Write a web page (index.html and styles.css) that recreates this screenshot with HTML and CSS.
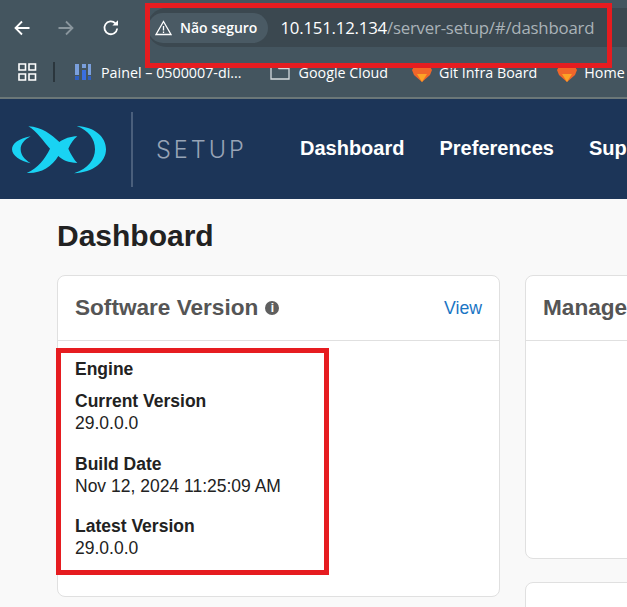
FILE: index.html
```html
<!DOCTYPE html>
<html lang="en">
<head>
    <meta charset="UTF-8">
    <meta name="viewport" content="width=device-width, initial-scale=1.0">
    <title>Dashboard</title>
    <link rel="stylesheet" href="styles.css">
</head>
<body>
    <div class="browser">
        <div class="toolbar">
            <svg class="tool-icon" width="18" height="18" viewBox="0 0 18 18"><path d="M16.5 9H2.5M9 2.5L2.5 9L9 15.5" fill="none" stroke="#fff" stroke-width="1.8"/></svg>
            <svg class="tool-icon forward" width="18" height="18" viewBox="0 0 18 18"><path d="M1.5 9H15.5M9 2.5L15.5 9L9 15.5" fill="none" stroke="#8a969d" stroke-width="1.8"/></svg>
            <svg class="tool-icon reload" width="18" height="18" viewBox="0 0 18 18"><path d="M15.2 9.5A6.4 6.4 0 1 1 13.4 4.3" fill="none" stroke="#fff" stroke-width="1.8"/><path d="M10.4 6.6H16V1.2Z" fill="#fff"/></svg>
            <div class="omnibox">
                <div class="chip">
                    <svg width="17" height="16" viewBox="0 0 17 16"><path d="M8.5 1.5L16 14.5H1Z" fill="none" stroke="#fff" stroke-width="1.3"/><path d="M8.5 6V10.5M8.5 11.5V13" stroke="#fff" stroke-width="1.3"/></svg>
                    <span>Não seguro</span>
                </div>
                <div class="url">10.151.12.134<span class="url-path">/server-setup/#/dashboard</span></div>
            </div>
        </div>
        <div class="bookmarks">
            <svg class="apps" width="19" height="18" viewBox="0 0 19 18"><path d="M1 1h6.500v6h-6.500zM11 1h6.500v6h-6.500zM1 11h6.500v6h-6.500zM11 11h6.500v6h-6.500z" fill="none" stroke="#fff" stroke-width="1.600"/></svg>
            <span class="sep"></span>
            <div class="mark first">
                <svg width="16" height="16" viewBox="0 0 16 16"><path d="M0 0h4v11H0zM13 0h3v11h-3zM7 0h4v4H7z" fill="#7a9fdc"/><path d="M0 12h4v4H0zM13 12h3v4h-3z" fill="#2f5fc0"/><path d="M7 6h4v10H7z" fill="#3a6fe0"/></svg>
                <span>Painel – 0500007-di...</span>
            </div>
            <div class="mark folder">
                <svg width="20" height="15" viewBox="0 0 20 15"><path d="M1 14V1h6l2 2.500h10V14Z" fill="none" stroke="#d5dadd" stroke-width="1.300"/></svg>
                <span>Google Cloud</span>
            </div>
            <div class="mark">
                <svg width="20" height="20" viewBox="0 0 20 20"><path d="M0 8L3 3L10 6L17 3L20 8L18 13L10 20L2 13Z" fill="#f0662a"/><path d="M5 12H15L10 20Z" fill="#fca326"/></svg>
                <span>Git Infra Board</span>
            </div>
            <div class="mark home">
                <svg width="20" height="20" viewBox="0 0 20 20"><path d="M0 8L3 3L10 6L17 3L20 8L18 13L10 20L2 13Z" fill="#f0662a"/><path d="M5 12H15L10 20Z" fill="#fca326"/></svg>
                <span>Home</span>
            </div>
        </div>
    </div>

    <header class="topnav">
        <svg class="logo" width="94" height="49" viewBox="36 80 282 145">
            <path d="M92 113C55 120 36 135 36 152C36 170 60 188 92 194C72 182 62 168 62 152C62 136 72 124 92 113Z" fill="#19d3f3"/>
            <path d="M230 82C285 85 318 115 318 152C318 190 280 222 222 224C265 210 285 182 285 152C285 120 265 95 230 82Z" fill="#19d3f3"/>
            <path d="M85 83C125 85 155 108 178 130C190 138 200 145 205 150C212 165 222 183 232 193C205 192 188 185 175 172C165 165 155 157 150 150C130 128 110 98 85 83Z" fill="#19d3f3"/>
            <path d="M232 113C212 113 192 120 178 130C165 138 155 145 150 150C135 180 115 208 80 223C120 226 155 205 175 172C185 165 195 160 205 150C212 135 220 122 232 113Z" fill="#19d3f3"/>
        </svg>
        <span class="nav-divider"></span>
        <span class="product">SETUP</span>
        <nav class="nav-links">
            <a>Dashboard</a>
            <a>Preferences</a>
            <a>Support</a>
        </nav>
    </header>

    <main class="content">
        <h1>Dashboard</h1>
        <div class="grid">
            <section class="card version-card">
                <div class="card-head">
                    <h2>Software Version</h2>
                    <span class="info">i</span>
                    <a class="view">View</a>
                </div>
                <div class="card-body">
                    <div class="engine">Engine</div>
                    <div class="field">
                        <b>Current Version</b>
                        <span>29.0.0.0</span>
                    </div>
                    <div class="field">
                        <b>Build Date</b>
                        <span>Nov 12, 2024 11:25:09 AM</span>
                    </div>
                    <div class="field">
                        <b>Latest Version</b>
                        <span>29.0.0.0</span>
                    </div>
                </div>
            </section>
            <div class="side">
                <section class="card manage-card">
                    <div class="card-head">
                        <h2>Manage</h2>
                    </div>
                </section>
                <section class="card">
                    <div class="card-head">
                        <h2>Storage</h2>
                    </div>
                </section>
            </div>
        </div>
    </main>

    <div class="mark-box url-box"></div>
    <div class="mark-box engine-box"></div>
</body>
</html>
```

FILE: styles.css
```css
html, body {
    margin: 0;
    padding: 0;
    height: 100%;
    overflow: hidden;
}

body {
    position: relative;
    width: 627px;
    height: 607px;
    background-color: #f9f9f9;
    font-family: "Liberation Sans", Arial, sans-serif;
    color: #222;
}

/* browser chrome */
.browser {
    height: 97px;
    background-color: #44555f;
    border-bottom: 2px solid #6b7778;
    font-family: "Open Sans", "Noto Sans", sans-serif;
    color: #fff;
}

.toolbar {
    display: flex;
    align-items: center;
    height: 39px;
    padding: 8px 0 8px 13px;
}

.tool-icon {
    flex: none;
}

.forward {
    margin-left: 26px;
}

.reload {
    margin-left: 27px;
}

.omnibox {
    display: flex;
    align-items: center;
    flex: none;
    width: 500px;
    height: 39px;
    margin-left: 27px;
    border-radius: 20px 0 0 20px;
    background-color: #3b4850;
}

.chip {
    display: flex;
    align-items: center;
    gap: 8px;
    height: 30px;
    margin-left: 1px;
    padding: 0 11px 0 7px;
    border-radius: 15px;
    background-color: #4a5a64;
    font-size: 14px;
    font-weight: 600;
}

.url {
    margin-left: 12px;
    font-size: 16.8px;
    letter-spacing: -0.2px;
    white-space: nowrap;
}

.url-path {
    color: #aab3b8;
}

.bookmarks {
    display: flex;
    align-items: center;
    height: 34px;
    padding-left: 18px;
    font-size: 14.3px;
    white-space: nowrap;
}

.apps {
    flex: none;
}

.sep {
    flex: none;
    width: 2px;
    height: 20px;
    margin-left: 16px;
    background-color: #2b363d;
}

.mark {
    display: flex;
    align-items: center;
    flex: none;
    gap: 7px;
    margin-left: 24px;
}

.mark.first {
    gap: 10px;
    margin-left: 20px;
}

.mark.folder {
    gap: 9px;
    margin-left: 28px;
}

.mark.home {
    margin-left: 20px;
}

.mark svg {
    flex: none;
}

/* app header */
.topnav {
    display: flex;
    align-items: center;
    height: 100px;
    padding-left: 12px;
    background-color: #1c3558;
    white-space: nowrap;
}

.logo {
    flex: none;
}

.nav-divider {
    flex: none;
    width: 2px;
    height: 75px;
    margin-left: 25px;
    background-color: #4a5f7c;
}

.product {
    flex: none;
    width: 144px;
    margin-left: 23px;
    color: #98a4b6;
    font-family: "Inter", sans-serif;
    font-size: 23.5px;
    font-weight: 300;
    letter-spacing: 3px;
}

.nav-links {
    display: flex;
    flex: none;
    gap: 35px;
    margin-top: -2px;
    color: #fff;
    font-size: 20px;
    font-weight: 700;
}

/* page */
.content {
    padding: 0 0 0 57px;
}

h1 {
    margin: 0;
    padding-top: 18px;
    font-size: 30px;
    line-height: 37px;
    font-weight: 700;
    color: #222;
}

.grid {
    display: flex;
    gap: 25px;
    align-items: flex-start;
    width: 700px;
    margin-top: 21px;
}

.card {
    box-sizing: border-box;
    width: 443px;
    background-color: #fff;
    border: 1px solid #e0e0e0;
    border-radius: 8px;
}

.version-card {
    flex: none;
    height: 322px;
}

.side {
    display: flex;
    flex-direction: column;
    flex: none;
    gap: 23px;
}

.manage-card {
    height: 284px;
}

.card-head {
    display: flex;
    align-items: center;
    box-sizing: border-box;
    height: 65px;
    padding: 0 17px;
    border-bottom: 1px solid #e0e0e0;
}

h2 {
    margin: 0;
    font-size: 22.6px;
    font-weight: 700;
    color: #555;
}

.info {
    width: 14px;
    height: 14px;
    margin-left: 7px;
    border-radius: 50%;
    background-color: #5f5f5f;
    color: #fff;
    font-size: 12px;
    font-weight: 700;
    line-height: 14px;
    text-align: center;
}

.view {
    margin-left: auto;
    color: #1a75c4;
    font-size: 17.7px;
}

.card-body {
    padding: 17px 17px 0;
    font-size: 17.5px;
    line-height: 22px;
}

.engine {
    font-weight: 700;
    margin-bottom: 10px;
}

.field {
    display: flex;
    flex-direction: column;
    margin-bottom: 18.5px;
}

/* red annotation frames drawn over the screenshot */
.mark-box {
    position: absolute;
    box-sizing: border-box;
    border: 5px solid #e61c20;
}

.url-box {
    left: 145px;
    top: 3px;
    width: 467px;
    height: 65px;
}

.engine-box {
    left: 56px;
    top: 348px;
    width: 273px;
    height: 227px;
}
```
